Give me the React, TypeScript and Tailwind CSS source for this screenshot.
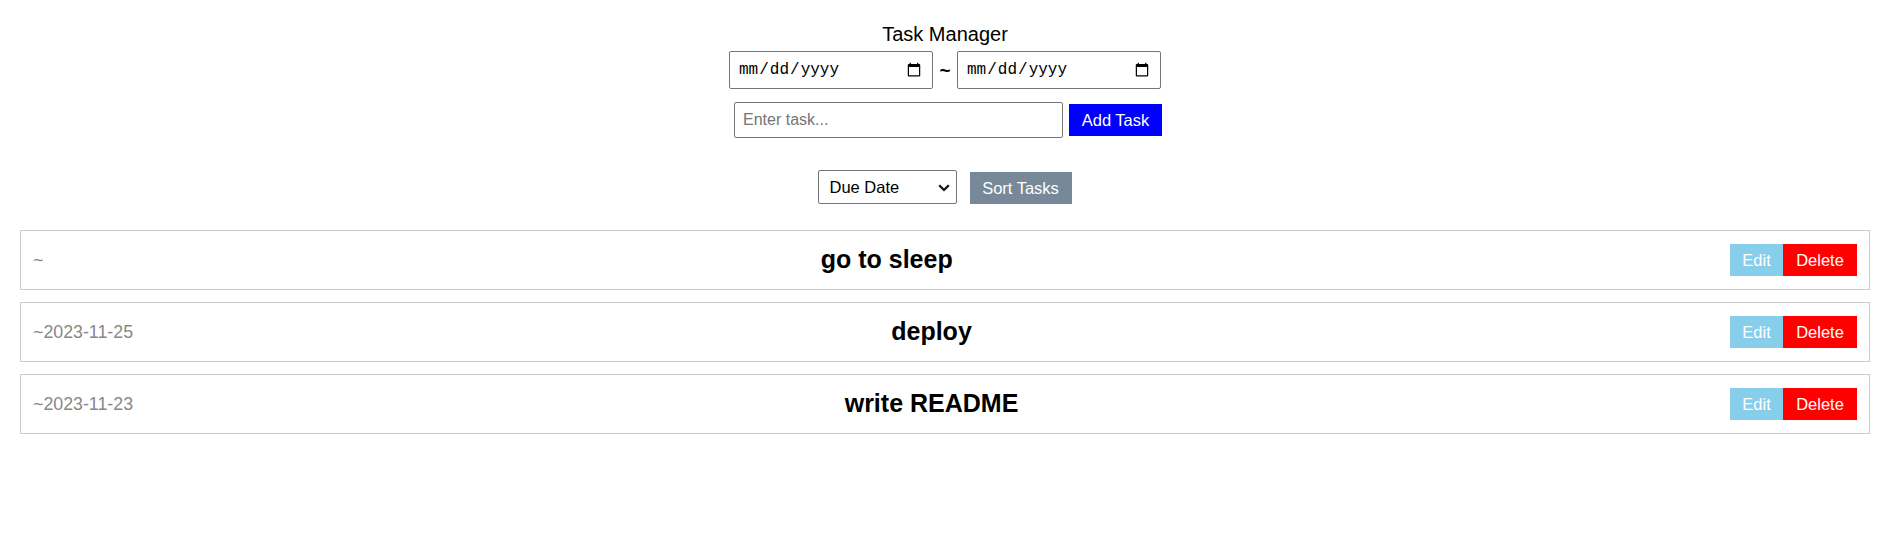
import React from "react";

const tasks = [
  { date: "~", title: "go to sleep" },
  { date: "~2023-11-25", title: "deploy" },
  { date: "~2023-11-23", title: "write README" },
];

export default function App() {
  return (
    <div
      className="w-full min-h-[560px] bg-white text-black"
      style={{ fontFamily: '"Liberation Sans", Arial, sans-serif' }}
    >
      <div className="pt-[23px] flex flex-col items-center">
        <div className="ml-[4px] h-[22px] leading-[22px] text-[20px] text-black">Task Manager</div>
        <div className="mt-[6px] ml-[4px] flex items-center h-[38px]">
          <input
            type="date"
            className="w-[204px] h-[38px] border border-[#767676] rounded-[2px] px-[8px] text-[16px] bg-white"
            style={{ fontFamily: '"Liberation Mono", monospace' }}
          />
          <span className="w-[24px] text-center text-[19px] font-bold leading-none">~</span>
          <input
            type="date"
            className="w-[204px] h-[38px] border border-[#767676] rounded-[2px] px-[8px] text-[16px] bg-white"
            style={{ fontFamily: '"Liberation Mono", monospace' }}
          />
        </div>
        <div className="mt-[13px] ml-[10px] flex items-center gap-[6px] h-[36px]">
          <input
            type="text"
            placeholder="Enter task..."
            className="w-[329px] h-[36px] border border-[#767676] rounded-[2px] px-[8px] text-[16px] placeholder:text-[#757575] outline-none"
          />
          <button className="w-[93px] h-[32px] bg-[#0000ff] text-white text-[16.5px] flex items-center justify-center">
            Add Task
          </button>
        </div>
        <div className="mt-[32px] ml-[3px] flex items-center gap-[13px] h-[34px]">
          <div className="relative w-[139px] h-[34px]">
            <select className="appearance-none w-[139px] h-[34px] border border-[#767676] rounded-[2px] pl-[11px] text-[16.5px] bg-white text-black outline-none">
              <option>Due Date</option>
              <option>Start Date</option>
              <option>Title</option>
            </select>
            <svg
              className="absolute right-[7px] top-[14px] pointer-events-none"
              width="12"
              height="8"
              viewBox="0 0 12 8"
              fill="none"
            >
              <path d="M1.2 1.2 L6 6 L10.8 1.2" stroke="#111" strokeWidth="2.2" />
            </svg>
          </div>
          <button className="w-[102px] h-[32px] mt-[2px] bg-[#778899] text-white text-[16.5px] flex items-center justify-center">
            Sort Tasks
          </button>
        </div>
      </div>
      <div className="mt-[26px] pl-[20px] pr-[16px] flex flex-col gap-[12px]">
        {tasks.map((t) => (
          <div
            key={t.title}
            className="h-[60px] border border-[#cccccc] flex items-center pl-[12px] pr-[12px]"
          >
            <span className="text-[17.8px] text-[#888888]">{t.date}</span>
            <span className="flex-1 text-center text-[25px] font-bold text-black">{t.title}</span>
            <div className="flex">
              <button className="w-[53px] h-[32px] bg-[#87ceeb] text-white text-[16.5px] flex items-center justify-center">
                Edit
              </button>
              <button className="w-[74px] h-[32px] bg-[#ff0000] text-white text-[16.5px] flex items-center justify-center">
                Delete
              </button>
            </div>
          </div>
        ))}
      </div>
    </div>
  );
}
